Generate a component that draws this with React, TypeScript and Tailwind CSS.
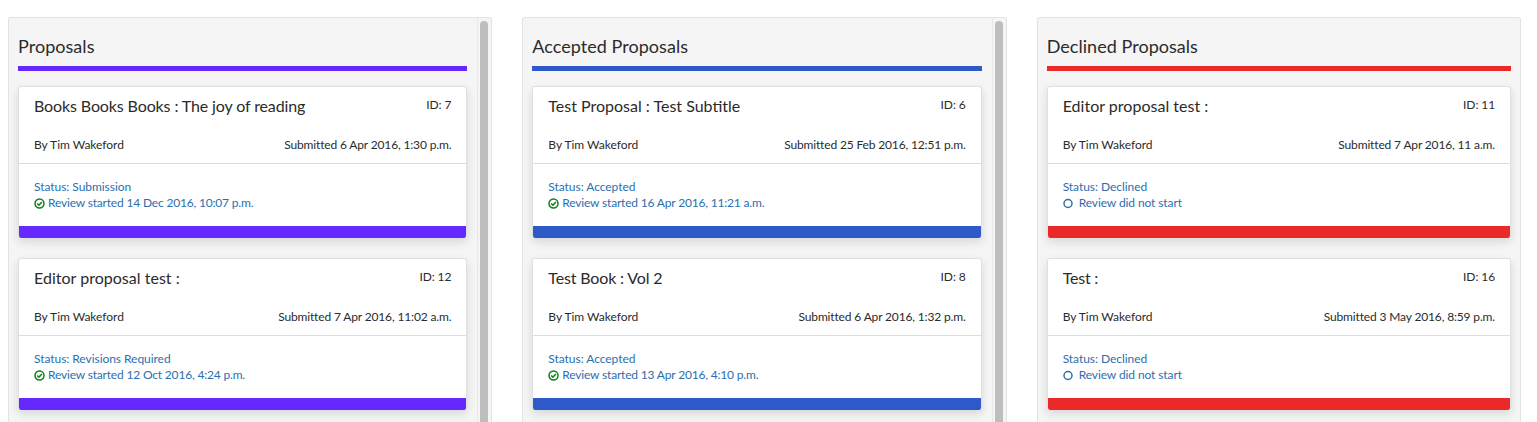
import React from "react";

type P = { title: string; tw: string; id: number; date: string; status: string; review: string; started: boolean };
type C = { name: string; bar: string; scroll: boolean; pad: string; items: P[] };

const cols: C[] = [
  {
    name: "Proposals",
    bar: "bg-[#6529fd]",
    scroll: true,
    pad: "pl-[9px] pr-[10px]",
    items: [
      { title: "Books Books Books : The joy of reading", tw: "tracking-[-0.12px]", id: 7, date: "Submitted 6 Apr 2016, 1:30 p.m.", status: "Status: Submission", review: "Review started 14 Dec 2016, 10:07 p.m.", started: true },
      { title: "Editor proposal test :", tw: "tracking-[0.02px]", id: 12, date: "Submitted 7 Apr 2016, 11:02 a.m.", status: "Status: Revisions Required", review: "Review started 12 Oct 2016, 4:24 p.m.", started: true },
    ],
  },
  {
    name: "Accepted Proposals",
    bar: "bg-[#2d59c9]",
    scroll: true,
    pad: "pl-[9px] pr-[10px]",
    items: [
      { title: "Test Proposal : Test Subtitle", tw: "tracking-normal", id: 6, date: "Submitted 25 Feb 2016, 12:51 p.m.", status: "Status: Accepted", review: "Review started 16 Apr 2016, 11:21 a.m.", started: true },
      { title: "Test Book : Vol 2", tw: "tracking-[-0.15px]", id: 8, date: "Submitted 6 Apr 2016, 1:32 p.m.", status: "Status: Accepted", review: "Review started 13 Apr 2016, 4:10 p.m.", started: true },
    ],
  },
  {
    name: "Declined Proposals",
    bar: "bg-[#e92a28]",
    scroll: false,
    pad: "pl-[9px] pr-[9px]",
    items: [
      { title: "Editor proposal test :", tw: "tracking-[0.02px]", id: 11, date: "Submitted 7 Apr 2016, 11 a.m.", status: "Status: Declined", review: "Review did not start", started: false },
      { title: "Test :", tw: "tracking-[-0.2px]", id: 16, date: "Submitted 3 May 2016, 8:59 p.m.", status: "Status: Declined", review: "Review did not start", started: false },
    ],
  },
];

function CheckIcon() {
  return (
    <svg width="11" height="11" viewBox="0 0 11 11" fill="none" className="shrink-0">
      <circle cx="5.5" cy="5.5" r="4.5" stroke="#0c8019" strokeWidth="1.5" />
      <path d="M3.2 5.5 L4.9 7.2 L7.9 4" stroke="#0c8019" strokeWidth="1.6" />
    </svg>
  );
}

function RingIcon() {
  return (
    <svg width="11" height="11" viewBox="0 0 11 11" fill="none" className="shrink-0">
      <circle cx="5" cy="5.5" r="4" stroke="#2f6fa8" strokeWidth="1.5" />
    </svg>
  );
}

function Card({ p, bar }: { p: P; bar: string }) {
  return (
    <div className="mb-5 h-[152px] rounded-[3px] border border-b-0 border-[#e0e0e0] bg-white shadow-[0_4px_10px_rgba(0,0,0,0.12)] flex flex-col overflow-hidden">
      <div className="flex justify-between px-[15px] h-[48px]">
        <div className={`mt-[7px] text-[16px] leading-[24px] text-[#2b2b2b] ${p.tw}`}>{p.title}</div>
        <div className="mt-[8px] text-[12px] leading-[20px] tracking-[-0.1px] text-[#2b2b2b]">ID: {p.id}</div>
      </div>
      <div className="flex justify-between px-[15px] h-[20px] mb-[8px] text-[12px] leading-[20px] text-[#2b2b2b]">
        <span className="tracking-[-0.03px]">By Tim Wakeford</span>
        <span className="tracking-[-0.15px]">{p.date}</span>
      </div>
      <div className="h-px bg-[#ddd]" />
      <div className="flex-1 px-[15px] pt-[15px] text-[12px] leading-[16px] text-[#2c6fae]">
        <div className="tracking-[-0.05px]">{p.status}</div>
        {p.started ? (
          <div className="flex items-center gap-[3px]">
            <CheckIcon />
            <span className="tracking-[-0.18px]">{p.review}</span>
          </div>
        ) : (
          <div className="flex items-center gap-[5px]">
            <RingIcon />
            <span className="tracking-[-0.1px]">{p.review}</span>
          </div>
        )}
      </div>
      <div className={`h-[12px] ${bar}`} />
    </div>
  );
}

function Column({ c }: { c: C }) {
  return (
    <div className="flex overflow-hidden rounded-t-[3px] border border-[#e3e3e3] border-b-0 bg-[#f5f5f5]">
      <div className={`flex-1 min-w-0 ${c.pad}`}>
        <h2 className="pt-[16px] pb-[8px] text-[18px] leading-[24px] tracking-[0.04px] text-[#2b2b2b]">{c.name}</h2>
        <div className={`h-[5px] ${c.bar} mb-[15px]`} />
        {c.items.map((p) => (
          <Card key={p.id} p={p} bar={c.bar} />
        ))}
      </div>
      {c.scroll && (
        <div className="w-[14px] shrink-0 border-l border-[#e8e8e8] pt-[3px] pl-[2px]">
          <div className="h-[500px] w-[8px] rounded-t-[4px] bg-[#bebebe]" />
        </div>
      )}
    </div>
  );
}

export default function App() {
  return (
    <div className="h-screen overflow-hidden bg-white pl-[8px] pr-[16px] pt-[17px] font-['Lato',sans-serif]">
      <div className="grid grid-cols-3 gap-[30px] h-full">
        {cols.map((c) => (
          <Column key={c.name} c={c} />
        ))}
      </div>
    </div>
  );
}
